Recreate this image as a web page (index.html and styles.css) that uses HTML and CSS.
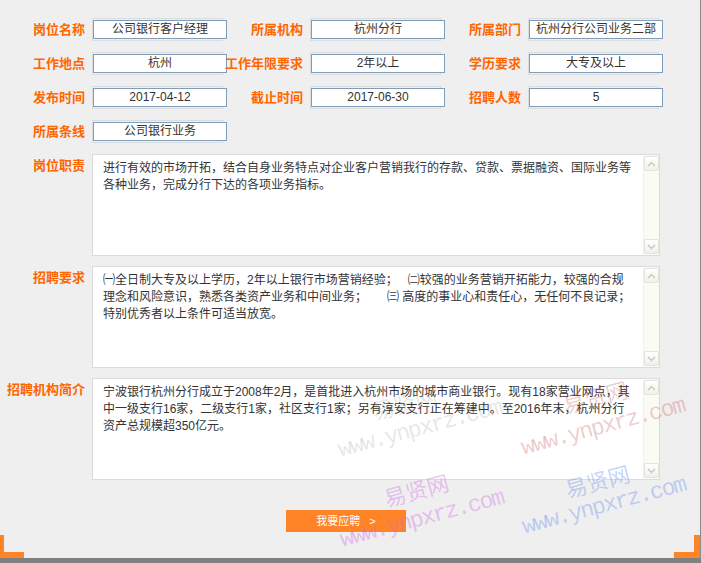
FILE: index.html
```html
<!DOCTYPE html>
<html lang="zh-CN">
<head>
<meta charset="utf-8">
<title>招聘信息</title>
<link rel="stylesheet" href="styles.css">
</head>
<body>
<div class="page">
  <div class="fields">
    <div class="field"><span class="label">岗位名称</span><span class="box"><span class="input">公司银行客户经理</span></span></div>
    <div class="field"><span class="label">所属机构</span><span class="box"><span class="input">杭州分行</span></span></div>
    <div class="field"><span class="label">所属部门</span><span class="box"><span class="input">杭州分行公司业务二部</span></span></div>
    <div class="field"><span class="label">工作地点</span><span class="box"><span class="input">杭州</span></span></div>
    <div class="field"><span class="label">工作年限要求</span><span class="box"><span class="input">2年以上</span></span></div>
    <div class="field"><span class="label">学历要求</span><span class="box"><span class="input">大专及以上</span></span></div>
    <div class="field"><span class="label">发布时间</span><span class="box"><span class="input">2017-04-12</span></span></div>
    <div class="field"><span class="label">截止时间</span><span class="box"><span class="input">2017-06-30</span></span></div>
    <div class="field"><span class="label">招聘人数</span><span class="box"><span class="input">5</span></span></div>
    <div class="field"><span class="label">所属条线</span><span class="box"><span class="input">公司银行业务</span></span></div>
  </div>

  <div class="area-row">
    <span class="label">岗位职责</span>
    <div class="area">
      <div class="area-text">进行有效的市场开拓，结合自身业务特点对企业客户营销我行的存款、贷款、票据融资、国际业务等<br>各种业务，完成分行下达的各项业务指标。</div>
      <div class="sb">
        <span class="sb-btn"><svg width="9" height="6" viewBox="0 0 9 6"><path d="M1 5 L4.5 1.5 L8 5" fill="none" stroke="#c9c9c2" stroke-width="1.4"/></svg></span>
        <span class="sb-btn"><svg width="9" height="6" viewBox="0 0 9 6"><path d="M1 1 L4.5 4.5 L8 1" fill="none" stroke="#c9c9c2" stroke-width="1.4"/></svg></span>
      </div>
    </div>
  </div>

  <div class="area-row">
    <span class="label">招聘要求</span>
    <div class="area">
      <div class="area-text">㈠全日制大专及以上学历，2年以上银行市场营销经验；&nbsp;&nbsp;&nbsp;㈡较强的业务营销开拓能力，较强的合规<br>理念和风险意识，熟悉各类资产业务和中间业务；&nbsp;&nbsp;&nbsp;&nbsp;&nbsp;&nbsp;㈢ 高度的事业心和责任心，无任何不良记录；<br>特别优秀者以上条件可适当放宽。</div>
      <div class="sb">
        <span class="sb-btn"><svg width="9" height="6" viewBox="0 0 9 6"><path d="M1 5 L4.5 1.5 L8 5" fill="none" stroke="#c9c9c2" stroke-width="1.4"/></svg></span>
        <span class="sb-btn"><svg width="9" height="6" viewBox="0 0 9 6"><path d="M1 1 L4.5 4.5 L8 1" fill="none" stroke="#c9c9c2" stroke-width="1.4"/></svg></span>
      </div>
    </div>
  </div>

  <div class="area-row">
    <span class="label">招聘机构简介</span>
    <div class="area">
      <div class="area-text">宁波银行杭州分行成立于2008年2月，是首批进入杭州市场的城市商业银行。现有18家营业网点，其<br>中一级支行16家，二级支行1家，社区支行1家；另有淳安支行正在筹建中。至2016年末，杭州分行<br>资产总规模超350亿元。</div>
      <div class="sb">
        <span class="sb-btn"><svg width="9" height="6" viewBox="0 0 9 6"><path d="M1 5 L4.5 1.5 L8 5" fill="none" stroke="#c9c9c2" stroke-width="1.4"/></svg></span>
        <span class="sb-btn"><svg width="9" height="6" viewBox="0 0 9 6"><path d="M1 1 L4.5 4.5 L8 1" fill="none" stroke="#c9c9c2" stroke-width="1.4"/></svg></span>
      </div>
    </div>
  </div>

  <div class="actions"><a class="apply" href="#">我要应聘&nbsp;&nbsp;&nbsp;&gt;</a></div>

  <span class="wm wm-cn wm-grey" style="left:371px;top:391px">易贤网</span>
  <span class="wm wm-url wm-grey" style="left:336px;top:418px">www.ynpxrz.com</span>
  <span class="wm wm-cn wm-red" style="left:562px;top:385px">易贤网</span>
  <span class="wm wm-url wm-red" style="left:519px;top:416px">www.ynpxrz.com</span>
  <span class="wm wm-cn wm-pink" style="left:383px;top:478px">易贤网</span>
  <span class="wm wm-url wm-pink" style="left:338px;top:508px">www.ynpxrz.com</span>
  <span class="wm wm-cn wm-blue" style="left:564px;top:469px">易贤网</span>
  <span class="wm wm-url wm-blue" style="left:520px;top:495px">www.ynpxrz.com</span>

  <span class="corner corner-l"></span>
  <span class="corner corner-r"></span>
</div>
<div class="bottom-bar"></div>
</body>
</html>
```

FILE: styles.css
```css
html, body {
  margin: 0;
  padding: 0;
}

body {
  background: #efefef;
  font-family: "Liberation Sans", "Noto Sans CJK SC", sans-serif;
  color: #333;
  width: 701px;
  height: 563px;
  overflow: hidden;
}

.page {
  position: relative;
  box-sizing: border-box;
  width: 701px;
  height: 558px;
  padding-top: 18px;
  border-right: 1px solid #8a8a8a;
}

.fields {
  display: grid;
  grid-template-columns: repeat(3, 218px);
  row-gap: 11px;
}

.field {
  display: flex;
  align-items: center;
  height: 23px;
}

.label {
  flex: none;
  width: 85px;
  margin-right: 7px;
  text-align: right;
  white-space: nowrap;
  color: #ff6600;
  font-family: "Noto Sans CJK SC", sans-serif;
  font-weight: bold;
  font-size: 13px;
  line-height: 18px;
}

.field .label {
  padding-bottom: 2px;
}

.box {
  flex: none;
  box-sizing: border-box;
  width: 131px;
  height: 23px;
  padding-top: 1px;
  border: 1px solid #dcdcdc;
}

.input {
  display: block;
  box-sizing: border-box;
  width: 134px;
  height: 19px;
  border: 1px solid #7f9db9;
  background: #fff;
  color: #333;
  font-size: 12px;
  line-height: 17px;
  text-align: center;
  white-space: nowrap;
}

.area-row {
  display: flex;
  margin-top: 10px;
}

.fields + .area-row {
  margin-top: 11px;
}

.area-row .label {
  padding-top: 2px;
}

.area {
  display: flex;
  box-sizing: border-box;
  width: 568px;
  height: 102px;
  border: 1px solid #dcdcdc;
  background: #fff;
}

.area-text {
  flex: 1;
  padding: 5px 0 0 10px;
  color: #333;
  font-size: 12px;
  line-height: 16.8px;
  white-space: nowrap;
}

.sb {
  flex: none;
  display: flex;
  flex-direction: column;
  justify-content: space-between;
  width: 16px;
  padding: 1px 0;
  background: #fbfbf5;
  border-left: 1px solid #f1f1ea;
  box-sizing: border-box;
}

.sb-btn {
  display: flex;
  align-items: center;
  justify-content: center;
  box-sizing: border-box;
  width: 15px;
  height: 15px;
  border: 1px solid #e4e4dc;
  border-radius: 2px;
  background: linear-gradient(#fefefc, #f1f1eb);
}

.actions {
  display: flex;
  margin-top: 30px;
  padding-left: 286px;
}

.apply {
  display: block;
  width: 120px;
  height: 22px;
  background: #ff8428;
  color: #fff;
  font-size: 11px;
  line-height: 22px;
  text-align: center;
  text-decoration: none;
  white-space: nowrap;
}

.wm {
  position: absolute;
  white-space: nowrap;
  transform: rotate(-15deg);
  pointer-events: none;
}

.wm-url {
  font-family: "Liberation Mono", monospace;
  font-size: 23px;
  line-height: 23px;
  letter-spacing: -1.8px;
}

.wm-cn {
  font-family: "Noto Sans CJK SC", sans-serif;
  font-size: 22px;
  line-height: 22px;
}

.wm-grey { color: rgba(110, 110, 110, 0.18); }
.wm-red { color: rgba(185, 60, 60, 0.26); }
.wm-pink { color: rgba(205, 100, 230, 0.36); }
.wm-blue { color: rgba(80, 125, 235, 0.32); }

.corner {
  position: absolute;
  bottom: 0;
  box-sizing: border-box;
  height: 23px;
  border-bottom: 6px solid #ff8428;
}

.corner-l {
  left: 0;
  width: 24px;
  border-left: 4px solid #ff8428;
}

.corner-r {
  right: 0;
  width: 26px;
  border-right: 6px solid #ff8428;
}

.bottom-bar {
  height: 5px;
  background: #808080;
}
```
